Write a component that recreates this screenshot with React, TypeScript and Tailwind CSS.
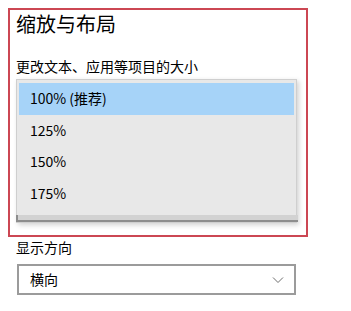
import React from "react";

const font = "font-['Noto_Sans_CJK_SC','Microsoft_YaHei',sans-serif]";

const scaleOptions = ["100% (推荐)", "125%", "150%", "175%"];

const ChevronDown: React.FC = () => (
  <svg width="12" height="8" viewBox="0 0 12 8" fill="none">
    <path d="M1 1.5 L6 6.5 L11 1.5" stroke="#6e6e6e" strokeWidth="1" />
  </svg>
);

export default function App() {
  const selected = 0;

  return (
    <div className={`w-[351px] h-[311px] bg-white text-black overflow-hidden ${font}`}>
      <div className="ml-[8px] mt-[8px] w-[300px] h-[229px] border-2 border-[#cc4753] pl-[6px]">
        <h1 className="text-[20px] leading-[28px] font-normal">缩放与布局</h1>
        <p className="mt-[18px] text-[14px] leading-[20px]">更改文本、应用等项目的大小</p>

        <div className="mt-[3px] w-[281px] h-[144px] flex flex-col bg-[#e8e8e8] border border-[#cfcfcf] shadow-[2px_2px_5px_rgba(0,0,0,0.18)] pt-[3px]">
          {scaleOptions.map((label, idx) => (
            <div
              key={label}
              className={
                (idx === selected ? "bg-[#a6d3f8] " : "") +
                "mx-[2px] h-[31.5px] flex items-center pl-[11px] text-[14px]"
              }
            >
              {label}
            </div>
          ))}
          <div className="mt-auto h-[7px] border-l-2 border-b-2 border-[#8d8d8d] bg-[#d2d2d2] -ml-px -mr-[2px]" />
        </div>
      </div>

      <div className="pl-[16px]">
        <p className="text-[14px] leading-[20px]">显示方向</p>
        <div className="mt-[7px] ml-px w-[279px] h-[31px] border-2 border-[#9b9b9b] flex items-center justify-between pl-[11px] pr-[10px]">
          <span className="text-[14px]">横向</span>
          <ChevronDown />
        </div>
      </div>
    </div>
  );
}
